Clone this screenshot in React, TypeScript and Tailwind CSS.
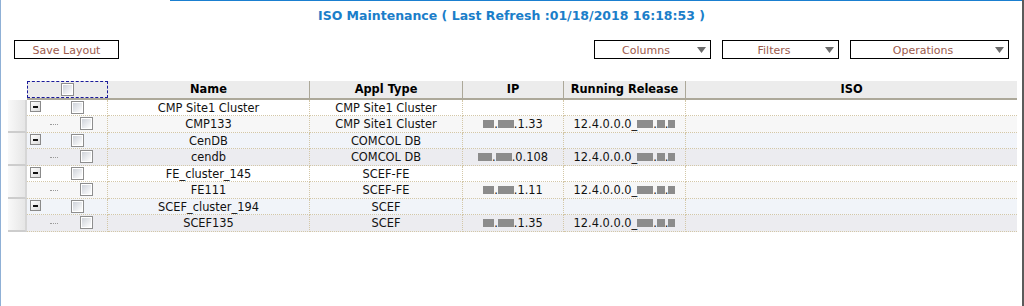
import React from "react";

const Mask = ({ w }: { w: number }) => (
  <span className="inline-block h-[8px] bg-[#8c8c8c]" style={{ width: w }} />
);

const Checkbox = () => (
  <span className="inline-block w-[13px] h-[13px] border border-[#8e8e8e] bg-white p-px">
    <span className="block w-full h-full bg-gradient-to-br from-[#cfd3da] to-white" />
  </span>
);

const Expander = () => (
  <span className="inline-flex items-center justify-center w-[11px] h-[11px] border border-[#8a8a8a] bg-gradient-to-br from-white to-[#dcdcdc]">
    <span className="block w-[5px] h-[2px] bg-[#111]" />
  </span>
);

const Ip = ({ a, b, rest }: { a: number; b: number; rest: string }) => (
  <span>
    <Mask w={a} />.<Mask w={b} />
    {rest}
  </span>
);

const Release = () => (
  <span>
    12.4.0.0.0_<Mask w={16} />.<Mask w={8} />.<Mask w={7} />
  </span>
);

type Group = {
  name: string;
  type: string;
  child: string;
  ip: { a: number; b: number; rest: string };
};

const groups: Group[] = [
  { name: "CMP Site1 Cluster", type: "CMP Site1 Cluster", child: "CMP133", ip: { a: 11, b: 16, rest: ".1.33" } },
  { name: "CenDB", type: "COMCOL DB", child: "cendb", ip: { a: 14, b: 16, rest: ".0.108" } },
  { name: "FE_cluster_145", type: "SCEF-FE", child: "FE111", ip: { a: 11, b: 16, rest: ".1.11" } },
  { name: "SCEF_cluster_194", type: "SCEF", child: "SCEF135", ip: { a: 11, b: 16, rest: ".1.35" } },
];

const cell = "border-r border-b border-dotted border-[#d3c7a7] flex items-center justify-center pt-[2px]";

function Row({
  h,
  bg,
  first,
  name,
  type,
  ip,
  rel,
}: {
  h: string;
  bg: string;
  first: React.ReactNode;
  name: string;
  type: string;
  ip?: React.ReactNode;
  rel?: React.ReactNode;
}) {
  return (
    <div className={`flex ${h} ${bg}`}>
      <div className={`w-[81px] border-r border-b border-dotted border-[#d3c7a7] relative`}>{first}</div>
      <div className={`w-[202px] ${cell}`}>{name}</div>
      <div className={`w-[153px] ${cell}`}>{type}</div>
      <div className={`w-[101px] ${cell}`}>{ip}</div>
      <div className={`w-[122px] ${cell}`}>{rel}</div>
      <div className={`flex-1 ${cell} border-r-0`} />
    </div>
  );
}

const Dropdown = ({ label, w }: { label: string; w: string }) => (
  <div className={`${w} h-[19px] border border-black flex items-center pr-[3px]`}>
    <span className="flex-1 text-center text-[11px] leading-none text-[#9b5a4c] pt-px">{label}</span>
    <svg width="9" height="6" viewBox="0 0 9 6" className="mr-px">
      <path d="M0 0 H9 L4.5 6 Z" fill="#6b6b6b" />
    </svg>
  </div>
);

export default function App() {
  const bgs = ["bg-white", "bg-[#f7f7f7]", "bg-[#f1f4f9]", "bg-[#ececf0]"];
  return (
    <div className="w-[1024px] h-[306px] bg-white border-l border-l-[#8fb0d6] border-r-2 border-r-[#5b5b5b] font-['DejaVu_Sans',Verdana,sans-serif] text-[#111] overflow-hidden">
      <div className="flex">
        <div className="w-[169px]" />
        <div className="flex-1 h-px bg-[#1a7fd0]" />
      </div>
      <div className="pt-[8px] text-center text-[12.5px] leading-[14px] font-bold text-[#1b7ec9]">
        ISO Maintenance ( Last Refresh :01/18/2018 16:18:53 )
      </div>
      <div className="mt-[17px] flex items-center justify-between px-[13px]">
        <div className="w-[105px] h-[19px] border border-black flex items-center justify-center text-[11px] leading-none text-[#9b5a4c] pt-px">
          Save Layout
        </div>
        <div className="flex gap-[11px]">
          <Dropdown label="Columns" w="w-[117px]" />
          <Dropdown label="Filters" w="w-[117px]" />
          <Dropdown label="Operations" w="w-[159px]" />
        </div>
      </div>
      <div className="mt-[22px] ml-[7px] w-[1009px] text-[11.4px] leading-none">
        {/* header */}
        <div className="flex h-[19px]">
          <div className="w-[19px]" />
          <div className="flex-1 flex bg-[#ececec] border-b-2 border-[#aca899] font-bold text-black">
            <div className="w-[81px] flex items-center justify-center outline outline-1 outline-dashed outline-[#1a1a9a] -outline-offset-1">
              <Checkbox />
            </div>
            <div className="w-[202px] border-r border-[#aca899] flex items-center justify-center pt-px">Name</div>
            <div className="w-[153px] border-r border-[#aca899] flex items-center justify-center pt-px">Appl Type</div>
            <div className="w-[101px] border-r border-[#aca899] flex items-center justify-center pt-px">IP</div>
            <div className="w-[122px] border-r border-[#aca899] flex items-center justify-center pt-px">Running Release</div>
            <div className="flex-1 flex items-center justify-center pt-px">ISO</div>
          </div>
        </div>
        {/* body */}
        <div className="border-t border-[#cfcfcf] w-[19px] -mb-px" />
        {groups.map((g, i) => (
          <div key={g.name} className="flex">
            <div className="w-[19px] bg-gradient-to-r from-[#f9f9f9] to-[#e6e6e6] border-r-2 border-r-[#d6d6d6] border-b-2 border-b-[#cdcdcd]" />
            <div className="flex-1">
              <Row
                h="h-[16px]"
                bg={bgs[(i % 2) * 2]}
                first={
                  <>
                    <span className="absolute left-[3px] top-[1px] flex">
                      <Expander />
                    </span>
                    <span className="absolute left-[44px] top-[1px] flex">
                      <Checkbox />
                    </span>
                  </>
                }
                name={g.name}
                type={g.type}
              />
              <Row
                h="h-[17px]"
                bg={bgs[(i % 2) * 2 + 1]}
                first={
                  <>
                    <span className="absolute left-[23px] top-[8px] w-[8px] border-t border-dotted border-[#9a9a9a]" />
                    <span className="absolute left-[53px] top-[1px] flex">
                      <Checkbox />
                    </span>
                  </>
                }
                name={g.child}
                type={g.type}
                ip={<Ip {...g.ip} />}
                rel={<Release />}
              />
            </div>
          </div>
        ))}
      </div>
    </div>
  );
}
